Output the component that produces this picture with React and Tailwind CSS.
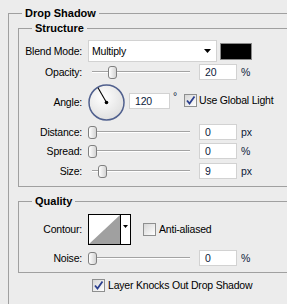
import React from "react";

const Label = ({ children }) => (
  <div className="w-[64px] shrink-0 text-right pr-[1px]">{children}</div>
);

const Checkbox = ({ checked }) => (
  <div className="w-[13px] h-[13px] shrink-0 border border-[#8e8f8f] bg-gradient-to-br from-[#d6d6d6] to-white flex items-center justify-center">
    {checked && (
      <svg width="11" height="11" viewBox="0 0 11 11">
        <path d="M2 5.5 L4.5 8.5 L9.5 1.5" stroke="#2b3f8e" strokeWidth="1.8" fill="none" />
      </svg>
    )}
  </div>
);

const NumBox = ({ value, w = "w-[38px]" }) => (
  <div className={`${w} h-[16px] shrink-0 bg-white border border-[#d2d2d2] pl-[5px] leading-[14px] text-[#0c1a3a]`}>
    {value}
  </div>
);

const Slider = ({ offset }) => (
  <div className="relative w-[102px] h-[16px] flex items-center shrink-0">
    <div className="ml-[4px] flex-1 h-[2px] border-t border-[#a3a3a3] bg-white" />
    <div
      className="absolute top-[2px] w-[9px] h-[13px] rounded-[3px] border border-[#808080] bg-gradient-to-r from-white to-[#d4d4d4]"
      style={{ left: offset }}
    />
  </div>
);

const SliderRow = ({ label, offset, value, unit, mt }) => (
  <div className={`flex items-center h-[16px] ${mt}`}>
    <Label>{label}</Label>
    <div className="ml-[5px]">
      <Slider offset={offset} />
    </div>
    <div className="ml-[9px]">
      <NumBox value={value} />
    </div>
    <div className="ml-[4px] text-[#0c1a3a]">{unit}</div>
  </div>
);

const Dial = () => (
  <svg width="38" height="38" viewBox="0 0 38 38" className="shrink-0">
    <defs>
      <radialGradient id="dg" cx="0.4" cy="0.35" r="0.7">
        <stop offset="0" stopColor="#ffffff" />
        <stop offset="1" stopColor="#dedede" />
      </radialGradient>
    </defs>
    <circle cx="18.5" cy="18.5" r="17.5" fill="url(#dg)" stroke="#50608e" strokeWidth="1.5" />
    <line x1="18.5" y1="18.5" x2="10" y2="3.8" stroke="#000" strokeWidth="1.1" />
    <circle cx="18.5" cy="18.5" r="1.8" fill="#000" />
  </svg>
);

const legendCls = "px-[3px] font-bold text-[11px] tracking-normal leading-[13px]";

export default function App() {
  return (
    <div className="w-[287px] h-[304px] overflow-hidden bg-[#ececec] text-[10.5px] tracking-[-0.2px] leading-[13px] text-black font-['Liberation_Sans',Arial,sans-serif]">
      <fieldset className="ml-[8px] mt-[7px] w-[300px] h-[330px] border border-[#a0a0a0] pl-[13px]">
        <legend className={legendCls}>Drop Shadow</legend>
        <div className="-ml-[4px] pt-[2px]">
          <fieldset className="w-[285px] border border-[#a0a0a0] pb-[7px] pl-[13px]">
            <legend className={legendCls}>Structure</legend>
            <div className="-ml-[13px]">
              <div className="flex items-center h-[22px] mt-[5px]">
                <Label>Blend Mode:</Label>
                <div className="ml-[5px] w-[129px] h-[22px] bg-white border border-[#d2d2d2] flex items-center justify-between pl-[3px] pr-[5px]">
                  <span>Multiply</span>
                  <svg width="7" height="4" viewBox="0 0 7 4">
                    <polygon points="0,0 7,0 3.5,4" fill="#000" />
                  </svg>
                </div>
                <div className="ml-[3px] w-[32px] h-[17px] bg-black border border-[#8a8a8a]" />
              </div>
              <SliderRow label="Opacity:" offset={20} value="20" unit="%" mt="mt-[2px]" />
              <div className="flex items-start h-[38px] mt-[4px]">
                <div className="mt-[12px]">
                  <Label>Angle:</Label>
                </div>
                <div className="ml-[5px]">
                  <Dial />
                </div>
                <div className="ml-[3px] mt-[9px]">
                  <NumBox value="120" w="w-[41px]" />
                </div>
                <div className="ml-[3px] mt-[6px] text-[#0c1a3a]">°</div>
                <div className="ml-[7px] mt-[10px]">
                  <Checkbox checked />
                </div>
                <div className="ml-[2px] mt-[10px]">Use Global Light</div>
              </div>
              <SliderRow label="Distance:" offset={0} value="0" unit="px" mt="mt-[2px]" />
              <SliderRow label="Spread:" offset={0} value="0" unit="%" mt="mt-[3px]" />
              <SliderRow label="Size:" offset={10} value="9" unit="px" mt="mt-[4px]" />
            </div>
          </fieldset>

          <fieldset className="mt-[8px] w-[285px] border border-[#a0a0a0] pb-[6px] pl-[13px]">
            <legend className={legendCls}>Quality</legend>
            <div className="-ml-[13px]">
              <div className="flex items-center h-[31px] mt-[6px]">
                <Label>Contour:</Label>
                <div className="ml-[5px] w-[43px] h-[31px] border border-black bg-white flex">
                  <svg width="31" height="29" viewBox="0 0 31 29" className="shrink-0">
                    <polygon points="0,29 31,0 31,29" fill="#a0a0a0" />
                  </svg>
                  <div className="flex-1 border-l border-black flex justify-center pt-[10px]">
                    <svg width="5" height="3" viewBox="0 0 5 3">
                      <polygon points="0,0 5,0 2.5,3" fill="#000" />
                    </svg>
                  </div>
                </div>
                <div className="ml-[12px]">
                  <Checkbox />
                </div>
                <div className="ml-[3px]">Anti-aliased</div>
              </div>
              <SliderRow label="Noise:" offset={0} value="0" unit="%" mt="mt-[5px]" />
            </div>
          </fieldset>

          <div className="flex items-center mt-[6px] pl-[74px]">
            <Checkbox checked />
            <div className="ml-[3px]">Layer Knocks Out Drop Shadow</div>
          </div>
        </div>
      </fieldset>
    </div>
  );
}
